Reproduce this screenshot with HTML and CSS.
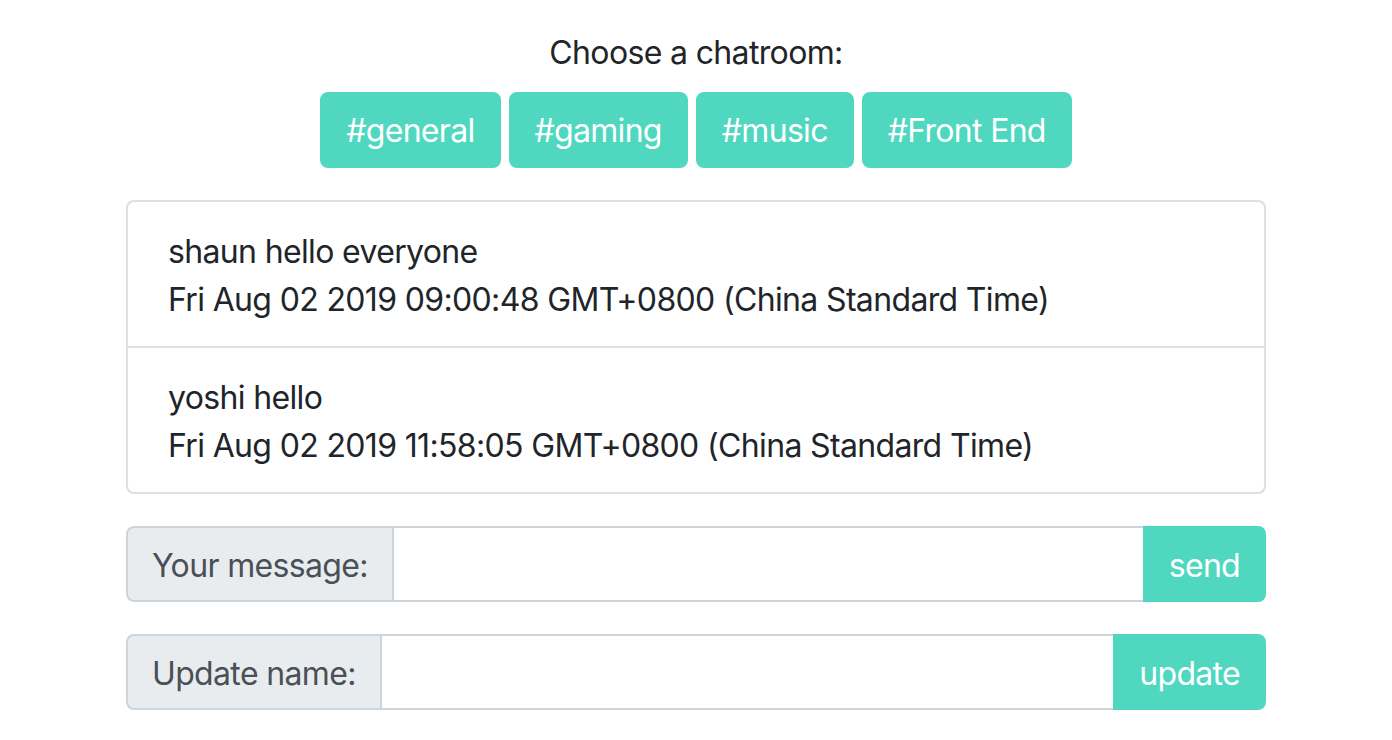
FILE: index.html
```html
<!DOCTYPE html>
<html lang="en">
<head>
<meta charset="utf-8">
<title>Chatroom</title>
<link rel="stylesheet" href="styles.css">
</head>
<body>
<div class="container">
  <div class="rooms">
    <p class="rooms-title">Choose a chatroom:</p>
    <div class="room-buttons">
      <button class="btn">#general</button>
      <button class="btn">#gaming</button>
      <button class="btn">#music</button>
      <button class="btn">#Front End</button>
    </div>
  </div>

  <ul class="list-group">
    <li class="list-item">
      <div>shaun hello everyone</div>
      <div>Fri Aug 02 2019 09:00:48 GMT+0800 (China Standard Time)</div>
    </li>
    <li class="list-item">
      <div>yoshi hello</div>
      <div>Fri Aug 02 2019 11:58:05 GMT+0800 (China Standard Time)</div>
    </li>
  </ul>

  <form class="input-group">
    <div class="input-label">Your message:</div>
    <input class="input-field" type="text">
    <button class="btn btn-append" type="button">send</button>
  </form>

  <form class="input-group">
    <div class="input-label">Update name:</div>
    <input class="input-field" type="text">
    <button class="btn btn-append" type="button">update</button>
  </form>
</div>
</body>
</html>
```

FILE: styles.css
```css
* {
  box-sizing: border-box;
}

body {
  margin: 0;
  font-family: Inter, "Noto Sans", "Liberation Sans", sans-serif;
  font-size: 32px;
  line-height: 48px;
  letter-spacing: -0.65px;
  color: #212529;
  background: #fff;
}

.container {
  width: 1140px;
  margin: 0 auto;
  padding-top: 29px;
}

.rooms {
  text-align: center;
}

.rooms-title {
  margin: 0 0 15px;
}

.room-buttons {
  display: flex;
  justify-content: center;
  gap: 8px;
}

.btn {
  font-family: inherit;
  font-size: 32px;
  line-height: 48px;
  letter-spacing: -0.7px;
  color: #fff;
  background: #4fd8bf;
  border: 2px solid #4fd8bf;
  border-radius: 8px;
  padding: 13px 24px 11px;
  cursor: pointer;
}

.list-group {
  list-style: none;
  margin: 32px 0 0;
  padding: 0;
  border: 2px solid #dfdfdf;
  border-radius: 8px;
}

.list-item {
  padding: 26px 40px 22px;
}

.list-item + .list-item {
  border-top: 2px solid #dfdfdf;
}

.input-group {
  display: flex;
  margin: 32px 0 0;
}

.input-label {
  padding: 14px 24px 10px;
  background: #e9ecef;
  color: #495057;
  border: 2px solid #ced4da;
  border-radius: 8px 0 0 8px;
  white-space: nowrap;
}

.input-field {
  flex: 1;
  min-width: 0;
  font-family: inherit;
  font-size: 32px;
  border: 2px solid #ced4da;
  border-left: 0;
  border-right: 0;
  padding: 12px 24px;
  outline: none;
}

.btn-append {
  border-radius: 0 8px 8px 0;
  padding-top: 14px;
  padding-bottom: 10px;
}
```
